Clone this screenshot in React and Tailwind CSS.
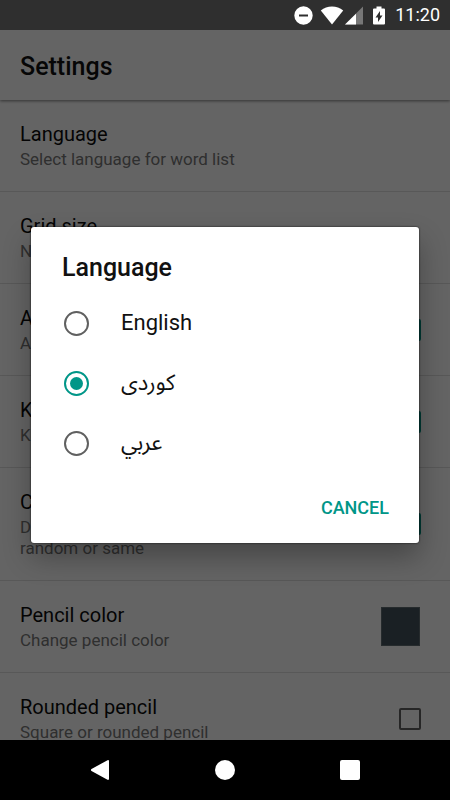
import { useState } from 'react'

const settings = [
  { id: 'language', title: 'Language', summary: 'Select language for word list' },
  { id: 'grid', title: 'Grid size', summary: 'Number of letters' },
  { id: 'audio', title: 'Audio', summary: 'Audio effects', checked: true },
  { id: 'keep', title: 'Keep screen on', summary: 'Keep the screen awake', checked: true },
  { id: 'colors', title: 'Colors', summary: 'Different color for each found word, random or same', checked: true },
  { id: 'pencil', title: 'Pencil color', summary: 'Change pencil color', swatch: true },
  { id: 'rounded', title: 'Rounded pencil', summary: 'Square or rounded pencil', checked: false },
]

const languages = [
  { value: 'en', label: 'English' },
  { value: 'ku', label: 'کوردی' },
  { value: 'ar', label: 'عربي' },
]

function StatusBar() {
  return (
    <div className="flex h-[30px] shrink-0 items-center justify-end bg-[#2f2f2f] pr-[10px] text-white">
      <svg className="mr-[7px] size-[19px]" viewBox="0 0 19 19" fill="currentColor">
        <path fillRule="evenodd" d="M9.5.3a9.2 9.2 0 1 1 0 18.4 9.2 9.2 0 0 1 0-18.4zM5 8.5v2h9v-2z" />
      </svg>
      <svg className="mr-[1px] h-[19px] w-[24px]" viewBox="0 0 24 19" fill="currentColor">
        <path d="M12 18.6.8 4.5C4 2 7.8.5 12 .5S20 2 23.200 4.500z" />
      </svg>
      <svg className="mr-[10px] h-[19px] w-[18px]" viewBox="0 0 18 19" fill="currentColor">
        <path d="M18 .5v18H0z" opacity=".35" />
        <path d="M11 7.700v10.800H0z" />
      </svg>
      <svg className="mr-[10px] h-[19px] w-[12px]" viewBox="0 0 12 19" fill="currentColor">
        <path fillRule="evenodd" d="M3.500.5h5v2H11a1 1 0 0 1 1 1v14a1 1 0 0 1-1 1H1a1 1 0 0 1-1-1v-14a1 1 0 0 1 1-1h2.500zM7 5l-4.500 6.500H5V16l4.500-6.500H7z" />
      </svg>
      <span className="text-[18px] leading-[30px]">11:20</span>
    </div>
  )
}

function SettingRow({ item }) {
  return (
    <li className="flex items-center justify-between border-b border-[#dcdcdc] py-[21px] pr-[29px] pl-5">
      <label htmlFor={item.id} className="flex max-w-[310px] flex-col gap-[2px]">
        <span className="text-[20px] leading-[26px] text-[#0c0c0c]">{item.title}</span>
        <span className="text-[17px] leading-[21px] text-[#757575]">{item.summary}</span>
      </label>
      {item.swatch && (
        <button id={item.id} type="button" aria-label="Pencil color" className="-my-2 mr-px size-[39px] border border-[#5f6b70] bg-[#43525a]" />
      )}
      {item.checked !== undefined && (
        <input
          id={item.id}
          type="checkbox"
          defaultChecked={item.checked}
          className="size-[22px] appearance-none rounded-[2px] border-2 border-[#606060] checked:border-[#009688] checked:bg-[#009688]"
        />
      )}
    </li>
  )
}

function LanguageDialog() {
  const [selected, setSelected] = useState('ku')

  return (
    <div className="absolute inset-0 flex items-center bg-black/60 px-[31px]">
      <div
        role="dialog"
        aria-labelledby="dialog-title"
        className="w-full rounded-[3px] bg-white shadow-[0_0_2px_rgba(0,0,0,0.9),0_14px_28px_rgba(0,0,0,0.3)]"
      >
        <h2 id="dialog-title" className="px-[31px] pt-[26px] pb-[10px] text-[25px] leading-[30px] font-medium text-[#111]">
          Language
        </h2>
        {languages.map(lang => (
          <label key={lang.value} className="flex h-[60px] items-center gap-8 pl-[33px] text-[22px] leading-[30px] text-[#111]">
            <input
              type="radio"
              name="language"
              value={lang.value}
              checked={selected === lang.value}
              onChange={() => setSelected(lang.value)}
              className="size-[25px] appearance-none rounded-full border-2 border-[#606060] bg-clip-content p-1 checked:border-[#009688] checked:bg-[#009688]"
            />
            <span>{lang.label}</span>
          </label>
        ))}
        <div className="flex h-[70px] items-center justify-end pr-[30px]">
          <button type="button" className="text-[18px] leading-[24px] font-medium text-[#009688]">CANCEL</button>
        </div>
      </div>
    </div>
  )
}

function NavBar() {
  return (
    <nav className="grid h-[60px] shrink-0 grid-cols-3 bg-black px-[38px] text-white">
      <button type="button" aria-label="Back" className="flex items-center justify-center">
        <svg className="size-5" viewBox="0 0 20 20" fill="currentColor">
          <path d="M1.500 9.100 17.500.2q1.500-.6 1.500 1v17.600q0 1.600-1.500 1L1.500 10.900q-1.200-.9 0-1.800z" />
        </svg>
      </button>
      <button type="button" aria-label="Home" className="flex items-center justify-center">
        <span className="size-5 rounded-full bg-white" />
      </button>
      <button type="button" aria-label="Recent apps" className="flex items-center justify-center">
        <span className="size-5 rounded-[2px] bg-white" />
      </button>
    </nav>
  )
}

export default function App() {
  return (
    <div className="flex h-screen flex-col font-['Roboto','Noto_Sans_Arabic','DejaVu_Sans',sans-serif]">
      <StatusBar />
      <main className="relative flex min-h-0 flex-1 flex-col overflow-hidden bg-[#fbfbfb]">
        <header className="flex h-[70px] shrink-0 items-center px-5 pt-1 shadow-[0_1px_3px_rgba(0,0,0,0.5)]">
          <h1 className="text-[25px] leading-[30px] font-medium text-[#111]">Settings</h1>
        </header>
        <ul>
          {settings.map(item => <SettingRow key={item.id} item={item} />)}
        </ul>
        <LanguageDialog />
      </main>
      <NavBar />
    </div>
  )
}
